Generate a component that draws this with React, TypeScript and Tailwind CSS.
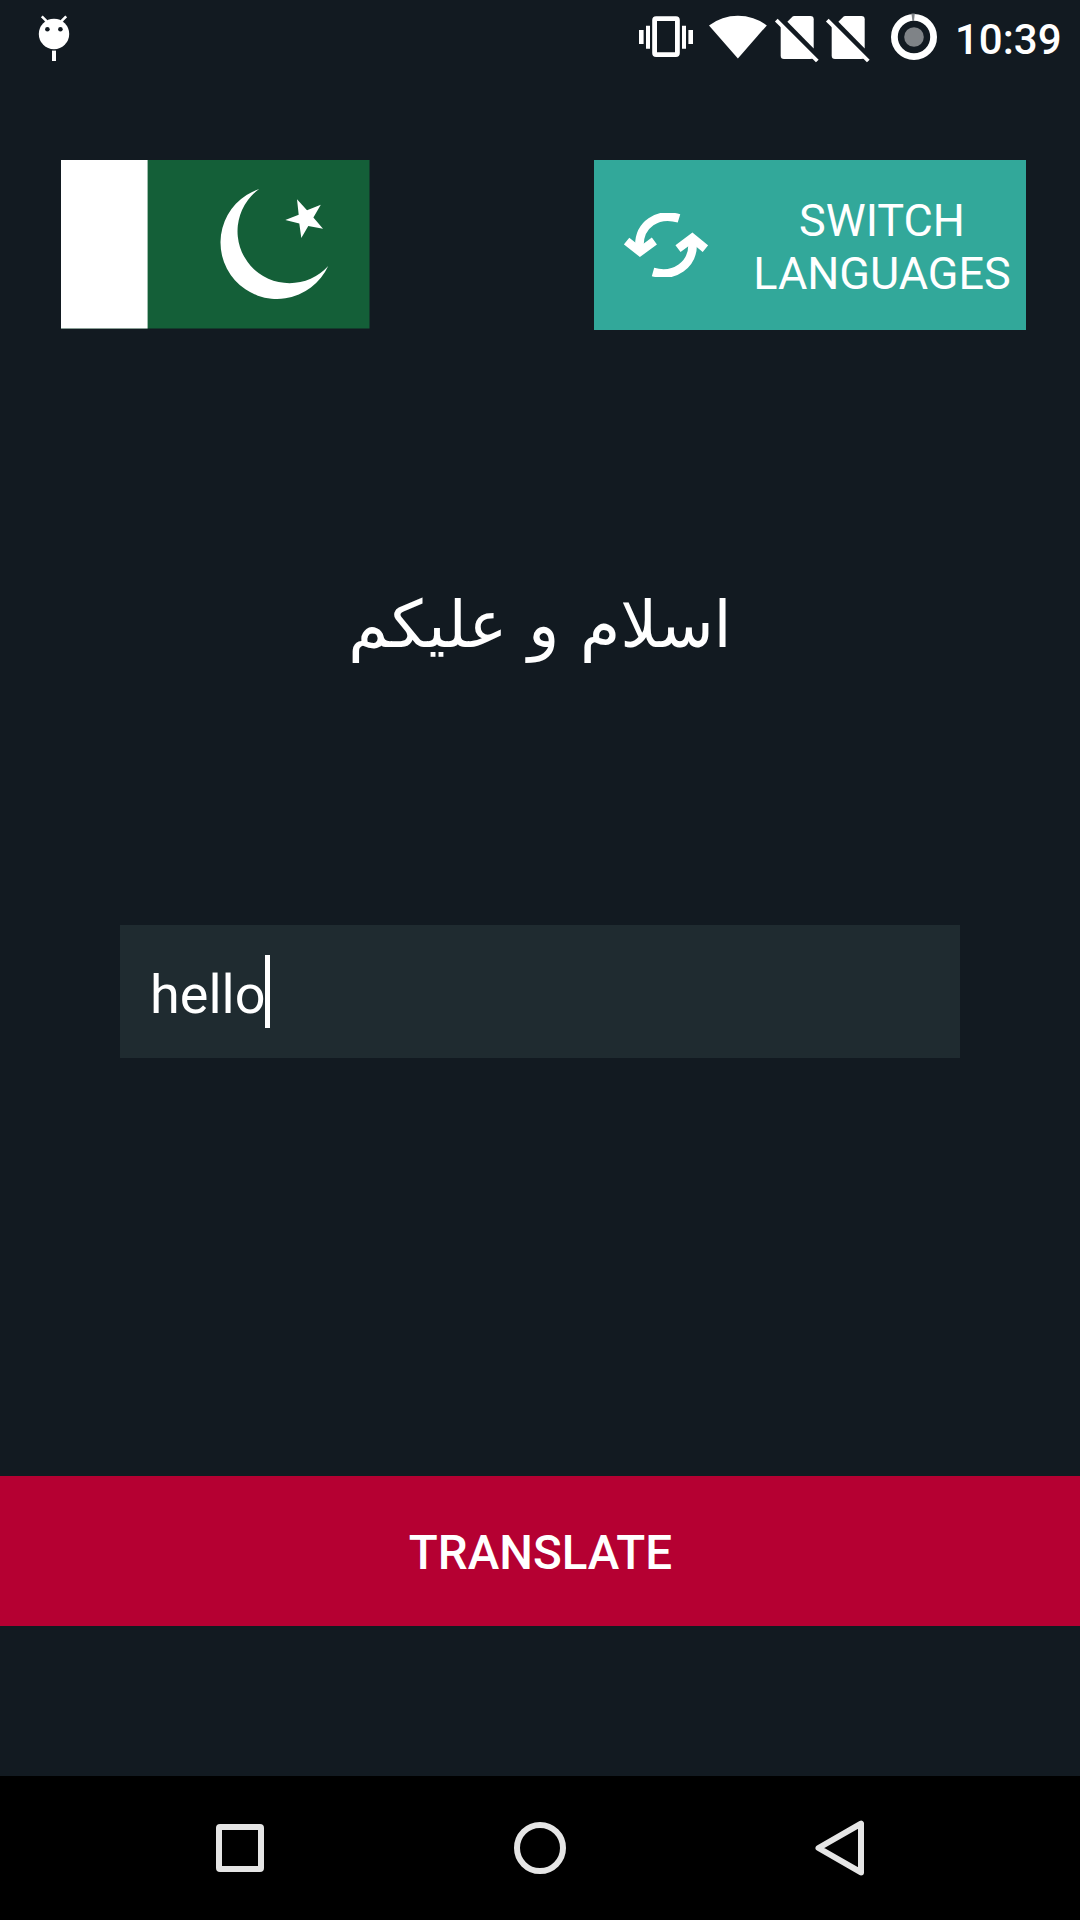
function AndroidIcon() {
  return (
    <svg width={32} height={48} viewBox="38 14 32 48" fill="#fff">
      <circle cx={54} cy={34} r={15.2} />
      <path d="M41.8 16.3l5 5M66.2 16.3l-5 5" stroke="#fff" strokeWidth={2.6} />
      <circle cx={47.4} cy={29.3} r={2.3} fill="#121a21" />
      <circle cx={60.4} cy={29.3} r={2.3} fill="#121a21" />
      <path d="M52 50.6h4v10.4h-4z" />
    </svg>
  )
}

function VibrateIcon() {
  return (
    <svg width={54} height={72} viewBox="639 0 54 72" fill="#fff">
      <path d="M639 30h4.6v14H639zM646 25.7h4v23h-4zM682 25.7h4v23h-4zM688.4 30h4.6v14h-4.6z" />
      <rect
        x={654.6}
        y={18.6}
        width={22.8}
        height={36}
        rx={1.5}
        fill="none"
        stroke="#fff"
        strokeWidth={4.8}
      />
    </svg>
  )
}

function WifiIcon() {
  return (
    <svg width={58} height={72} viewBox="709 0 58 72" fill="#fff">
      <path d="M737.9 58.6L709 25.4A48 48 0 0 1 766.8 25.4z" />
    </svg>
  )
}

function NoSimIcon() {
  return (
    <svg width={45} height={72} viewBox="774 0 45 72" fill="#fff">
      <path d="M787.4 21.8L792.6 16.6Q793.2 16 794 16H810.4Q813.7 16 813.7 19.3V48.6z" />
      <path d="M780.7 25L814 58.3Q812 59 810 59H784Q780.7 59 780.7 55.7z" />
      <path d="M776.3 20.1L817.3 61" stroke="#fff" strokeWidth={3.8} />
    </svg>
  )
}

function BatteryIcon() {
  return (
    <svg width={46} height={72} viewBox="891 0 46 72">
      <circle cx={914} cy={37} r={19.6} fill="none" stroke="#fff" strokeWidth={6.8} />
      <circle cx={914} cy={37} r={9.8} fill="#7f8387" />
      <path d="M911.4 13.6h3.4l-.8 7.4h-1.6z" fill="#7f8387" />
    </svg>
  )
}

function StatusBar() {
  return (
    <div className="h-[72px] flex items-start justify-between pl-[38px] pr-[18px]">
      <div className="pt-[14px]">
        <AndroidIcon />
      </div>
      <div className="flex items-start">
        <VibrateIcon />
        <div className="ml-4">
          <WifiIcon />
        </div>
        <div className="ml-[7px] flex gap-1.5">
          <NoSimIcon />
          <NoSimIcon />
        </div>
        <div className="ml-[21px]">
          <BatteryIcon />
        </div>
        <span className="w-[107px] ml-[18px] mt-[15px] text-[42px] leading-[50px] font-medium whitespace-nowrap">
          10:39
        </span>
      </div>
    </div>
  )
}

function Flag() {
  return (
    <svg width={309} height={169} viewBox="0 0 309 169" className="mr-auto">
      <path d="M0 0h308.5v168.5H0z" fill="#145f38" />
      <path d="M0 0h86.6v168.5H0z" fill="#fff" />
      <path
        d="M198.2 29A56.4 56.4 0 1 0 267.2 106A52 52 0 1 1 198.2 29z"
        fill="#fff"
      />
      <path
        d="M236 39.3L246 50.3 259.8 44.7 252.4 57.6 262 68.7 247.3 66 240.3 78 238.3 63.6 224.3 60 237.7 54.7z"
        fill="#fff"
      />
    </svg>
  )
}

function SwitchIcon() {
  return (
    <svg
      width={84}
      height={64}
      viewBox="0 0 84 64"
      fill="none"
      stroke="#fff"
      strokeWidth={8.6}
    >
      <path d="M55 5.4C34-1 14.5 11 15.4 34" />
      <path d="M2.6 28L16 38.6 30.4 28" />
      <path d="M29 59C50 65 69.5 52 68.6 30" />
      <path d="M54 35.6L68.3 25 81.4 35.6" />
    </svg>
  )
}

function NavBar() {
  return (
    <div className="h-36 bg-black flex items-center justify-between px-[216px]">
      <div className="w-12 h-12 border-[6px] border-[#e5e5e5] rounded-[4px]" />
      <div className="w-[52px] h-[52px] border-[6px] border-[#e5e5e5] rounded-full ml-[1px]" />
      <svg
        width={49}
        height={56}
        viewBox="0 0 49 56"
        fill="none"
        stroke="#e5e5e5"
        strokeWidth={6}
        strokeLinejoin="round"
      >
        <path d="M3.5 28L46 3.6V52.4z" />
      </svg>
    </div>
  )
}

export default function App() {
  return (
    <div className="w-[1080px] h-[1920px] overflow-hidden flex flex-col bg-[#121a21] text-white font-['Roboto',sans-serif]">
      <StatusBar />
      <div className="mt-[88px] pl-[61px] pr-[54px] flex items-start">
        <Flag />
        <button className="w-[432px] h-[170px] bg-[#32a89a] flex items-center pl-[30px] pr-[15px]">
          <SwitchIcon />
          <span className="flex-1 pl-[45px] pt-1 text-[45px] leading-[53px] text-center">
            SWITCH
            <br />
            LANGUAGES
          </span>
        </button>
      </div>
      <div className="h-[595px] flex items-center justify-center pb-1.5">
        <p
          dir="rtl"
          lang="ur"
          className="font-['DejaVu_Sans',sans-serif] text-[65px] leading-[100px] whitespace-nowrap"
        >
          اسلام و علیکم
        </p>
      </div>
      <div className="mx-[120px] h-[133px] bg-[#1f2b30] flex items-center pl-[30px]">
        <span className="text-[54px] leading-[64px] mt-[6px]">hello</span>
        <span className="w-[5px] h-[73px] bg-white" />
      </div>
      <button className="mt-[418px] h-[150px] bg-[#b50032] text-[47.5px] font-medium pt-[5px] pl-px">
        TRANSLATE
      </button>
      <div className="flex-1" />
      <NavBar />
    </div>
  )
}
